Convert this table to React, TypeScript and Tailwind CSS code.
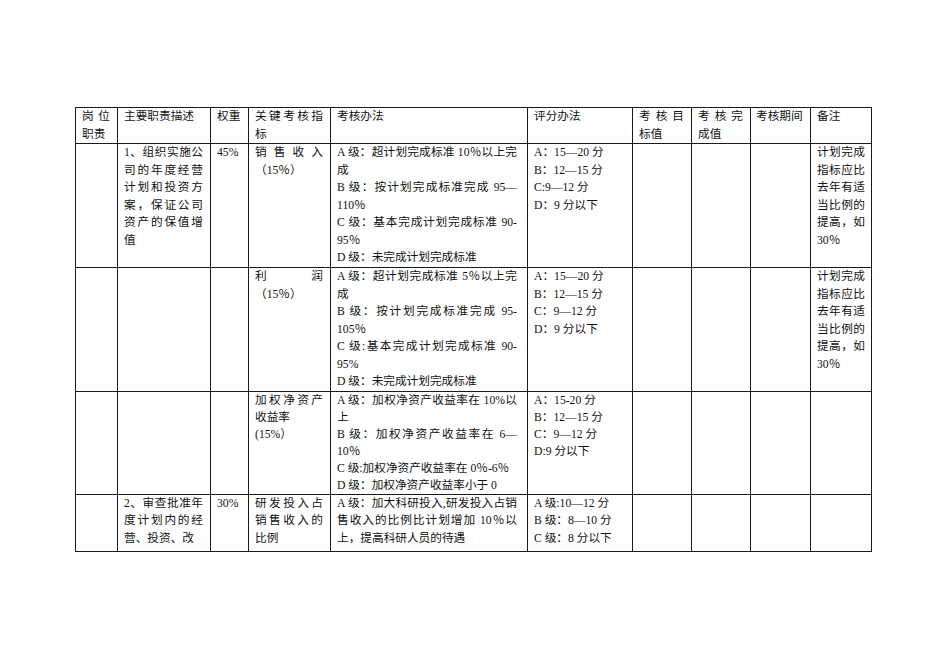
import React from 'react';

const cell = 'border border-[#1a1a1a] align-top pl-[6px] pr-[7px] pt-0 pb-0 text-justify';
const method = `${cell} !pr-[10px]`;

function Lines({ items }: { items: React.ReactNode[] }) {
  return (
    <>
      {items.map((t, i) => (
        <div key={i}>{t}</div>
      ))}
    </>
  );
}

export default function App() {
  return (
    <div className="min-h-screen bg-white pt-[107px] pl-[75px]">
      <table
        className="table-fixed border-collapse text-[11.67px] leading-[17.5px] text-[#111]"
        style={{ fontFamily: '"Liberation Serif", "Noto Sans CJK SC", serif', width: 796 }}
      >
        <colgroup>
          <col className="w-[42px]" />
          <col className="w-[93px]" />
          <col className="w-[38px]" />
          <col className="w-[82px]" />
          <col className="w-[197px]" />
          <col className="w-[105px]" />
          <col className="w-[59px]" />
          <col className="w-[59px]" />
          <col className="w-[60px]" />
          <col className="w-[61px]" />
        </colgroup>
        <tbody>
          <tr className="h-[36px]">
            <td className={cell}>岗位职责</td>
            <td className={cell}>主要职责描述</td>
            <td className={cell}>权重</td>
            <td className={cell}>关键考核指标</td>
            <td className={method}>考核办法</td>
            <td className={cell}>评分办法</td>
            <td className={cell}>考核目标值</td>
            <td className={cell}>考核完成值</td>
            <td className={`${cell} !px-[5px]`}>考核期间</td>
            <td className={`${cell} !px-[6px]`}>备注</td>
          </tr>

          <tr className="h-[124px]">
            <td className={cell}></td>
            <td className={cell}>1、组织实施公司的年度经营计划和投资方案，保证公司资产的保值增值</td>
            <td className={cell}>45%</td>
            <td className={cell}>销售收入（15％）</td>
            <td className={method}>
              <Lines
                items={[
                  'A 级：超计划完成标准 10％以上完成',
                  <>B 级：按计划完成标准完成 95—<wbr />110％</>,
                  <>C 级：基本完成计划完成标准 90-<wbr />95％</>,
                  'D 级：未完成计划完成标准',
                ]}
              />
            </td>
            <td className={cell}>
              <Lines items={['A：15—20 分', 'B：12—15 分', 'C:9—12 分', 'D：9 分以下']} />
            </td>
            <td className={cell}></td>
            <td className={cell}></td>
            <td className={cell}></td>
            <td className={`${cell} !px-[6px]`}>计划完成指标应比去年有适当比例的提高，如 30％</td>
          </tr>

          <tr className="h-[123px]">
            <td className={cell}></td>
            <td className={cell}></td>
            <td className={cell}></td>
            <td className={cell}>
              <div className="[text-align-last:justify]">利润</div>
              <div>（15％）</div>
            </td>
            <td className={method}>
              <Lines
                items={[
                  'A 级：超计划完成标准 5％以上完成',
                  <>B 级：按计划完成标准完成 95-<wbr />105％</>,
                  <>C 级:基本完成计划完成标准 90-<wbr />95%</>,
                  'D 级：未完成计划完成标准',
                ]}
              />
            </td>
            <td className={cell}>
              <Lines items={['A：15—20 分', 'B：12—15 分', 'C：9—12 分', 'D：9 分以下']} />
            </td>
            <td className={cell}></td>
            <td className={cell}></td>
            <td className={cell}></td>
            <td className={`${cell} !px-[6px]`}>计划完成指标应比去年有适当比例的提高，如 30％</td>
          </tr>

          <tr className="h-[103px] leading-[17px]">
            <td className={cell}></td>
            <td className={cell}></td>
            <td className={cell}></td>
            <td className={cell}>
              <div>加权净资产收益率</div>
              <div>(15%）</div>
            </td>
            <td className={method}>
              <Lines
                items={[
                  'A 级：加权净资产收益率在 10%以上',
                  <>B 级：加权净资产收益率在 6—<wbr />10％</>,
                  'C 级:加权净资产收益率在 0％-6％',
                  'D 级：加权净资产收益率小于 0',
                ]}
              />
            </td>
            <td className={cell}>
              <Lines items={['A：15-20 分', 'B：12—15 分', 'C：9—12 分', 'D:9 分以下']} />
            </td>
            <td className={cell}></td>
            <td className={cell}></td>
            <td className={cell}></td>
            <td className={`${cell} !px-[6px]`}></td>
          </tr>

          <tr className="h-[57px]">
            <td className={cell}></td>
            <td className={cell}>2、审查批准年度计划内的经营、投资、改</td>
            <td className={cell}>30%</td>
            <td className={cell}>研发投入占销售收入的比例</td>
            <td className={method}>A 级：加大科研投入,研发投入占销售收入的比例比计划增加 10％以上，提高科研人员的待遇</td>
            <td className={cell}>
              <Lines items={['A 级:10—12 分', 'B 级：8—10 分', 'C 级：8 分以下']} />
            </td>
            <td className={cell}></td>
            <td className={cell}></td>
            <td className={cell}></td>
            <td className={`${cell} !px-[6px]`}></td>
          </tr>
        </tbody>
      </table>
    </div>
  );
}
